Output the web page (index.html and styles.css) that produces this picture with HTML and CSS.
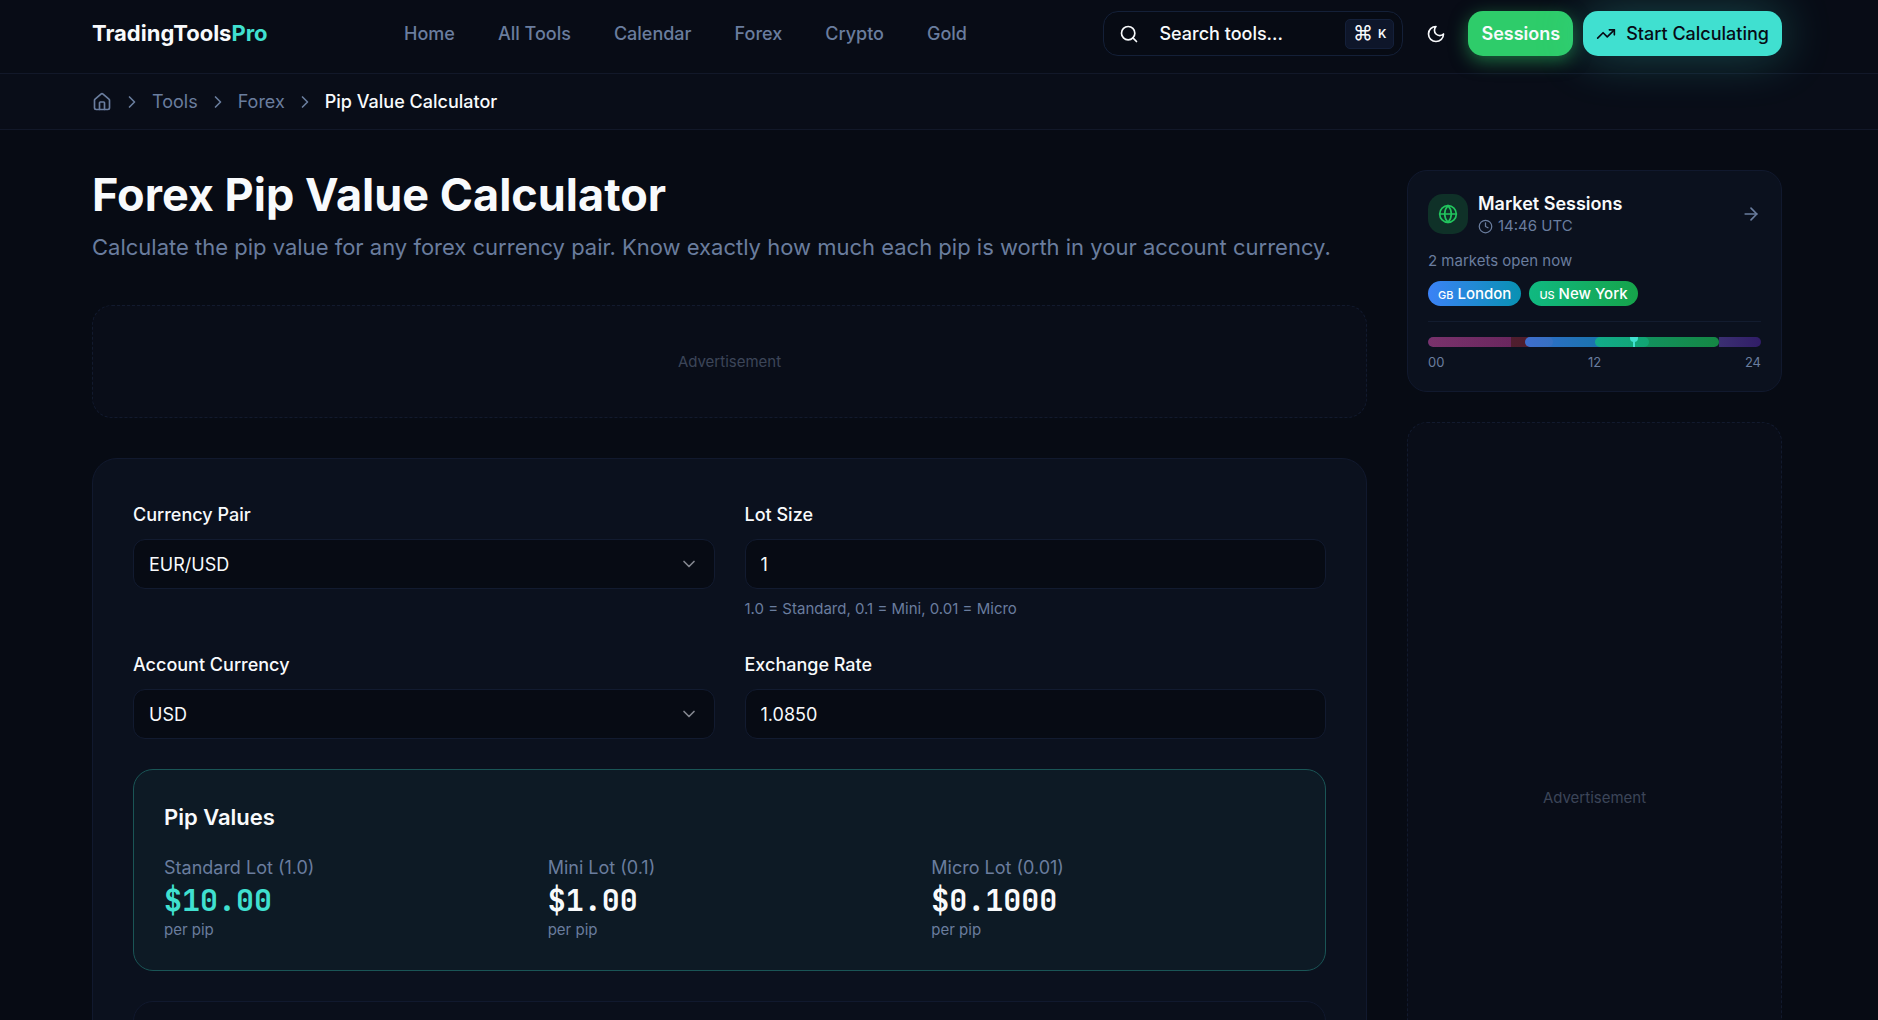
FILE: index.html
```html
<!DOCTYPE html>
<html lang="en">
<head>
  <meta charset="UTF-8" />
  <meta name="viewport" content="width=device-width, initial-scale=1.0"/>
  <title>Forex Pip Value Calculator - TradingToolsPro</title>
  <link rel="stylesheet" href="styles.css">
</head>
<body>

  <!-- Header -->
  <header class="site-header">
    <div class="container header-inner">
      <a href="#" class="logo">TradingTools<span>Pro</span></a>
      <nav class="main-nav">
        <a href="#">Home</a>
        <a href="#">All Tools</a>
        <a href="#">Calendar</a>
        <a href="#">Forex</a>
        <a href="#">Crypto</a>
        <a href="#">Gold</a>
      </nav>
      <div class="header-actions">
        <button type="button" class="search-btn">
          <svg class="icon" viewBox="0 0 24 24"><circle cx="11" cy="11" r="8"/><path d="m21 21-4.3-4.3"/></svg>
          <span>Search tools...</span>
          <kbd><span class="cmd">⌘</span>K</kbd>
        </button>
        <button type="button" class="theme-btn" aria-label="Toggle theme">
          <svg class="icon" viewBox="0 0 24 24"><path d="M12 3a6 6 0 0 0 9 9 9 9 0 1 1-9-9Z"/></svg>
        </button>
        <a href="#" class="btn btn-green">Sessions</a>
        <a href="#" class="btn btn-teal">
          <svg class="icon" viewBox="0 0 24 24"><path d="M22 7 13.5 15.5 8.5 10.5 2 17"/><path d="M16 7h6v6"/></svg>
          Start Calculating
        </a>
      </div>
    </div>
  </header>

  <!-- Breadcrumb -->
  <nav class="breadcrumb-bar" aria-label="Breadcrumb">
    <div class="container breadcrumb">
      <a href="#" aria-label="Home"><svg class="icon" viewBox="0 0 24 24"><path d="M15 21v-8a1 1 0 0 0-1-1h-4a1 1 0 0 0-1 1v8"/><path d="M3 10a2 2 0 0 1 .709-1.528l7-5.999a2 2 0 0 1 2.582 0l7 5.999A2 2 0 0 1 21 10v9a2 2 0 0 1-2 2H5a2 2 0 0 1-2-2z"/></svg></a>
      <svg class="icon" viewBox="0 0 24 24"><path d="m9 18 6-6-6-6"/></svg>
      <a href="#">Tools</a>
      <svg class="icon" viewBox="0 0 24 24"><path d="m9 18 6-6-6-6"/></svg>
      <a href="#">Forex</a>
      <svg class="icon" viewBox="0 0 24 24"><path d="m9 18 6-6-6-6"/></svg>
      <span class="current">Pip Value Calculator</span>
    </div>
  </nav>

  <!-- Main Content -->
  <div class="container page">
    <main>
      <h1>Forex Pip Value Calculator</h1>
      <p class="lead">Calculate the pip value for any forex currency pair. Know exactly how much each pip is worth in your account currency.</p>

      <div class="ad ad-banner">Advertisement</div>

      <section class="calculator">
        <form class="form-grid">
          <div class="field">
            <label for="pair">Currency Pair</label>
            <div class="select-wrap">
              <select id="pair">
                <option>EUR/USD</option>
                <option>GBP/USD</option>
                <option>USD/JPY</option>
              </select>
              <svg class="icon" viewBox="0 0 24 24"><path d="m6 9 6 6 6-6"/></svg>
            </div>
          </div>
          <div class="field">
            <label for="lot">Lot Size</label>
            <input id="lot" type="text" inputmode="decimal" value="1">
            <p class="hint">1.0 = Standard, 0.1 = Mini, 0.01 = Micro</p>
          </div>
          <div class="field">
            <label for="account">Account Currency</label>
            <div class="select-wrap">
              <select id="account">
                <option>USD</option>
                <option>EUR</option>
                <option>GBP</option>
              </select>
              <svg class="icon" viewBox="0 0 24 24"><path d="m6 9 6 6 6-6"/></svg>
            </div>
          </div>
          <div class="field">
            <label for="rate">Exchange Rate</label>
            <input id="rate" type="text" inputmode="decimal" value="1.0850">
          </div>
        </form>

        <!-- Results -->
        <div class="results">
          <h2>Pip Values</h2>
          <div class="result-grid">
            <div class="result">
              <p class="result-label">Standard Lot (1.0)</p>
              <p class="result-value accent">$10.00</p>
              <p class="result-unit">per pip</p>
            </div>
            <div class="result">
              <p class="result-label">Mini Lot (0.1)</p>
              <p class="result-value">$1.00</p>
              <p class="result-unit">per pip</p>
            </div>
            <div class="result">
              <p class="result-label">Micro Lot (0.01)</p>
              <p class="result-value">$0.1000</p>
              <p class="result-unit">per pip</p>
            </div>
          </div>
        </div>

        <div class="formula"></div>
      </section>
    </main>

    <!-- Sidebar -->
    <aside class="sidebar">
      <section class="sessions-card">
        <a href="#" class="sessions-head">
          <span class="globe">
            <svg class="icon" viewBox="0 0 24 24"><circle cx="12" cy="12" r="10"/><path d="M12 2a14.500 14.500 0 0 0 0 20 14.500 14.500 0 0 0 0-20"/><path d="M2 12h20"/></svg>
          </span>
          <span class="sessions-title">
            <strong>Market Sessions</strong>
            <span class="clock">
              <svg class="icon" viewBox="0 0 24 24"><circle cx="12" cy="12" r="10"/><path d="M12 6v6l4 2"/></svg>
              14:46 UTC
            </span>
          </span>
          <svg class="icon arrow" viewBox="0 0 24 24"><path d="M5 12h14"/><path d="m12 5 7 7-7 7"/></svg>
        </a>
        <p class="open-count">2 markets open now</p>
        <div class="pills">
          <span class="pill london"><small>GB</small> London</span>
          <span class="pill newyork"><small>US</small> New York</span>
        </div>
        <div class="timeline">
          <div class="track">
            <span class="seg seg-sydney-am"></span>
            <span class="seg seg-sydney-pm"></span>
            <span class="seg seg-tokyo"></span>
            <span class="seg seg-london"></span>
            <span class="seg seg-newyork"></span>
            <span class="now"></span>
          </div>
          <div class="hours"><span>00</span><span>12</span><span>24</span></div>
        </div>
      </section>

      <div class="ad ad-tall">Advertisement</div>
    </aside>
  </div>

</body>
</html>
```
FILE: styles.css
```css
:root {
  --bg: #070b14;
  --bar: #090d18;
  --card: #0b111e;
  --border: #11192e;
  --text: #f8fafc;
  --muted: #6a7d9e;
  --teal: #40e0d0;
  --green: #2ecc6a;
}

* {
  margin: 0;
  padding: 0;
  box-sizing: border-box;
}

body {
  font-family: Inter, sans-serif;
  font-size: 18px;
  line-height: 25px;
  background: var(--bg);
  color: var(--text);
}

a {
  color: inherit;
  text-decoration: none;
}

button, input, select {
  font: inherit;
  color: inherit;
}

.icon {
  width: 20px;
  height: 20px;
  flex-shrink: 0;
  display: block;
  fill: none;
  stroke: currentColor;
  stroke-width: 2;
  stroke-linecap: round;
  stroke-linejoin: round;
}

.container {
  margin: 0 96px 0 92px;
}

/* Header */
.site-header {
  position: relative;
  z-index: 10;
  background: #080c16;
  border-bottom: 1px solid #121829;
}

.header-inner {
  display: flex;
  justify-content: space-between;
  align-items: center;
  padding: 11px 0 17px;
}

.logo {
  font-size: 22px;
  font-weight: 700;
}

.logo span {
  color: var(--teal);
}

.main-nav {
  display: flex;
  gap: 43px;
  font-weight: 500;
  color: var(--muted);
}

.header-actions {
  display: flex;
  align-items: center;
}

.search-btn {
  display: flex;
  align-items: center;
  width: 300px;
  height: 45px;
  padding: 0 8px 0 15px;
  border: 1px solid #142038;
  border-radius: 15px;
  background: var(--bg);
  font-weight: 500;
}

.search-btn .icon {
  margin-right: 20px;
}

kbd {
  display: flex;
  align-items: center;
  gap: 5px;
  height: 30px;
  margin-left: auto;
  padding: 0 7px;
  border: 1px solid #14203a;
  border-radius: 5px;
  background: #0e162a;
  font-family: Inter, sans-serif;
  font-size: 12px;
  font-weight: 600;
}

.cmd {
  font-size: 20px;
  font-weight: 400;
}

.theme-btn {
  display: grid;
  place-items: center;
  width: 45px;
  height: 45px;
  margin: 0 10px;
  border: 0;
  background: none;
}

.btn {
  display: flex;
  align-items: center;
  gap: 10px;
  height: 45px;
  padding: 0 13px;
  border-radius: 15px;
  font-weight: 500;
}

.btn-green {
  margin-right: 10px;
  background: var(--green);
  font-weight: 600;
  box-shadow: 0 5px 18px rgba(46, 204, 106, 0.5);
}

.btn-teal {
  background: var(--teal);
  color: #070b15;
  box-shadow: 0 0 50px rgba(64, 224, 208, 0.3);
}

/* Breadcrumb */
.breadcrumb-bar {
  background: var(--bar);
  border-bottom: 1px solid #121829;
}

.breadcrumb {
  display: flex;
  align-items: center;
  gap: 10px;
  padding: 15px 0;
  color: var(--muted);
}

.breadcrumb .current {
  font-weight: 500;
  color: var(--text);
}

/* Page */
.page {
  display: grid;
  grid-template-columns: minmax(0, 1fr) 375px;
  gap: 40px;
  padding: 40px 0;
}

h1 {
  margin-bottom: 10px;
  font-size: 45px;
  line-height: 50px;
  font-weight: 700;
}

.lead {
  margin-bottom: 40px;
  font-size: 22px;
  line-height: 35px;
  color: var(--muted);
}

.ad {
  display: grid;
  place-items: center;
  border: 1px dashed #121a2e;
  border-radius: 20px;
  background: #090d18;
  font-size: 15px;
  color: #3c4558;
}

.ad-banner {
  height: 113px;
  margin-bottom: 40px;
}

.ad-tall {
  height: 750px;
}

/* Calculator */
.calculator {
  padding: 40px;
  border: 1px solid var(--border);
  border-radius: 25px;
  background: var(--card);
}

.form-grid {
  display: grid;
  grid-template-columns: 1fr 1fr;
  gap: 30px;
}

.field label {
  display: block;
  margin-bottom: 8px;
  line-height: 32px;
  font-weight: 500;
}

.field input,
.field select {
  display: block;
  width: 100%;
  height: 50px;
  padding: 0 15px;
  border: 1px solid #121b30;
  border-radius: 12px;
  background: var(--bg);
}

.field select {
  appearance: none;
}

.select-wrap {
  display: grid;
  align-items: center;
}

.select-wrap select,
.select-wrap .icon {
  grid-area: 1 / 1;
}

.select-wrap .icon {
  justify-self: end;
  margin-right: 16px;
  color: #848790;
  pointer-events: none;
}

.hint {
  margin-top: 10px;
  font-size: 15px;
  line-height: 20px;
  color: var(--muted);
}

.results {
  margin: 30px 0;
  padding: 30px;
  border: 1px solid #1a5556;
  border-radius: 20px;
  background: #0d1a25;
}

.results h2 {
  margin-bottom: 20px;
  font-size: 22px;
  line-height: 35px;
  font-weight: 600;
}

.result-grid {
  display: grid;
  grid-template-columns: repeat(3, 1fr);
  gap: 20px;
}

.result-label {
  color: var(--muted);
}

.result-value {
  font-family: "JetBrains Mono", "Liberation Mono", monospace;
  font-size: 30px;
  line-height: 40px;
  font-weight: 700;
}

.result-value.accent {
  color: var(--teal);
}

.result-unit {
  font-size: 15px;
  line-height: 20px;
  color: var(--muted);
}

.formula {
  height: 140px;
  border: 1px solid var(--border);
  border-radius: 20px;
  background: #0a0f1b;
}

/* Sidebar */
.sidebar {
  display: flex;
  flex-direction: column;
  gap: 30px;
}

.sessions-card {
  padding: 20px;
  border: 1px solid var(--border);
  border-radius: 20px;
  background: var(--card);
  font-size: 15px;
  line-height: 20px;
  color: var(--muted);
}

.sessions-head {
  display: flex;
  align-items: center;
  gap: 10px;
  margin-bottom: 15px;
}

.globe {
  display: grid;
  place-items: center;
  width: 40px;
  height: 40px;
  border-radius: 15px;
  background: #0f3128;
  color: #22c55e;
}

.sessions-title strong {
  display: block;
  font-size: 18px;
  line-height: 25px;
  font-weight: 600;
  color: var(--text);
}

.clock {
  display: flex;
  align-items: center;
  gap: 5px;
}

.clock .icon {
  width: 15px;
  height: 15px;
}

.arrow {
  margin-left: auto;
}

.pills {
  display: flex;
  gap: 8px;
  margin: 10px 0 15px;
}

.pill {
  padding: 0 10px;
  border-radius: 13px;
  line-height: 25px;
  font-weight: 500;
  color: #fff;
}

.pill small {
  font-size: 11px;
  line-height: 1;
}

.london {
  background: linear-gradient(to right, #3b82f6, #0891b2);
}

.newyork {
  background: linear-gradient(to right, #10b981, #16a34a);
}

.timeline {
  padding-top: 15px;
  border-top: 1px solid #131c2f;
}

.track {
  position: relative;
  height: 10px;
  margin-bottom: 6px;
  border-radius: 5px;
  background: #10172a;
  overflow: hidden;
}

/* Sessions overlap, so each one is laid over the 24h track */
.seg {
  position: absolute;
  top: 0;
  bottom: 0;
}

.seg-sydney-am {
  left: 0;
  width: 25%;
  background: linear-gradient(to right, #a855f7, #7c3aed);
  opacity: 0.35;
}

.seg-sydney-pm {
  right: 0;
  width: 12.5%;
  background: linear-gradient(to right, #8b5cf6, #6d28d9);
  opacity: 0.35;
}

.seg-tokyo {
  left: 0;
  width: 37.5%;
  border-radius: 5px;
  background: linear-gradient(to right, #f43f5e, #dc2626);
  opacity: 0.3;
}

.seg-london {
  left: 29%;
  width: 37.5%;
  border-radius: 5px;
  background: linear-gradient(to right, #3b82f6, #0891b2);
  opacity: 0.8;
}

.seg-newyork {
  left: 50%;
  width: 37.5%;
  border-radius: 5px;
  background: linear-gradient(to right, #10b981, #16a34a);
  opacity: 0.8;
}

.now {
  position: absolute;
  top: 0;
  bottom: 0;
  left: 61.5%;
  width: 2px;
  background: var(--teal);
}

.now::before {
  content: "";
  position: absolute;
  top: -3px;
  left: -3px;
  width: 8px;
  height: 8px;
  border-radius: 50%;
  background: var(--teal);
}

.hours {
  display: flex;
  justify-content: space-between;
  font-size: 13px;
  line-height: 18px;
}
```
